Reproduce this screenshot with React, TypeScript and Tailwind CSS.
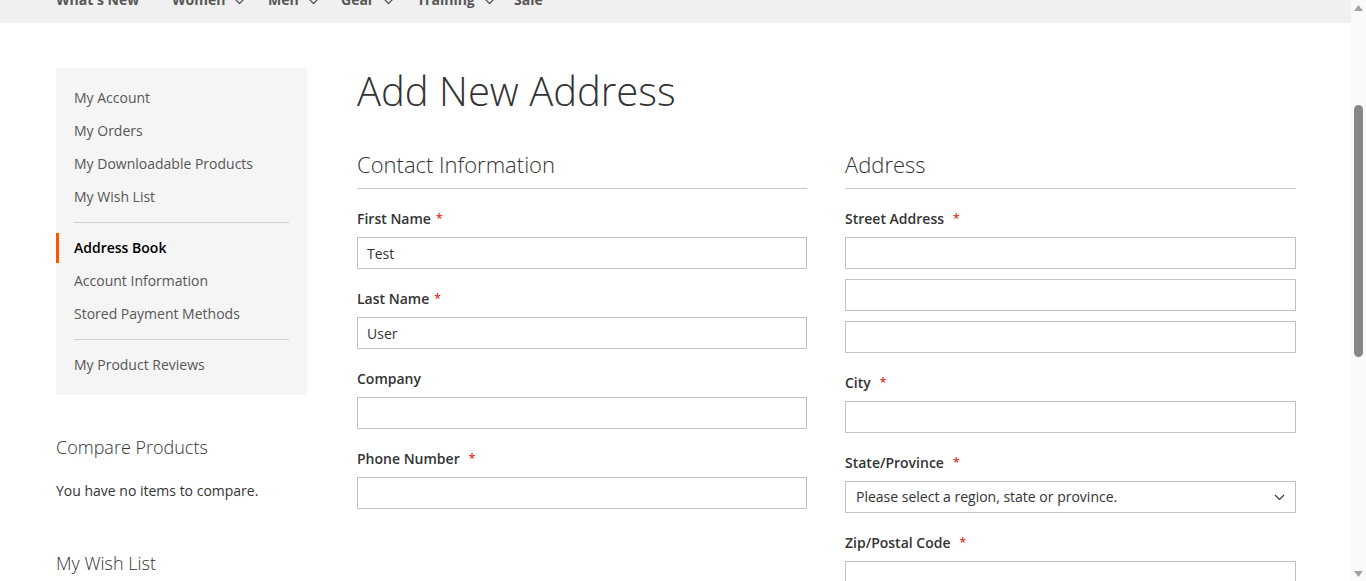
import React from "react";

const navItems = [
  { label: "What's New", w: "w-[116px]", chevron: false },
  { label: "Women", w: "w-[96px]", chevron: true },
  { label: "Men", w: "w-[73px]", chevron: true },
  { label: "Gear", w: "w-[76px]", chevron: true },
  { label: "Training", w: "w-[97px]", chevron: true },
  { label: "Sale", w: "w-[60px]", chevron: false },
];

type NavEntry = { kind: "item"; label: string; active?: boolean } | { kind: "divider" };

const accountNav: NavEntry[] = [
  { kind: "item", label: "My Account" },
  { kind: "item", label: "My Orders" },
  { kind: "item", label: "My Downloadable Products" },
  { kind: "item", label: "My Wish List" },
  { kind: "divider" },
  { kind: "item", label: "Address Book", active: true },
  { kind: "item", label: "Account Information" },
  { kind: "item", label: "Stored Payment Methods" },
  { kind: "divider" },
  { kind: "item", label: "My Product Reviews" },
];

function Chevron() {
  return (
    <svg width="11" height="7" viewBox="0 0 11 7" className="ml-[9px] mt-[2px]">
      <polyline points="1,1 5.5,5.5 10,1" fill="none" stroke="#575757" strokeWidth="1.3" />
    </svg>
  );
}

function Req({ wide }: { wide?: boolean }) {
  return <span className={`text-[#e02b27] text-[12px] ${wide ? "ml-[9px]" : "ml-[5px]"}`}>*</span>;
}

function Label({ text, req, wide }: { text: string; req?: boolean; wide?: boolean }) {
  return (
    <div className="h-[20px] leading-[20px] text-[14px] font-semibold text-[#333] mb-[8px] flex items-start">
      <span>{text}</span>
      {req && <Req wide={wide} />}
    </div>
  );
}

function Input({ value }: { value?: string }) {
  return (
    <div className="h-[32px] border border-[#c2c2c2] bg-white px-[9px] flex items-center text-[14px] text-[#333]">
      {value}
    </div>
  );
}

function Field({ label, req, wide, value, last }: { label: string; req?: boolean; wide?: boolean; value?: string; last?: boolean }) {
  return (
    <div className={last ? "" : "mb-[20px]"}>
      <Label text={label} req={req} wide={wide} />
      <Input value={value} />
    </div>
  );
}

export default function App() {
  let afterDivider = true;
  return (
    <div className="w-full h-[581px] overflow-hidden flex bg-white font-['Open_Sans','Noto_Sans',sans-serif] text-[#333]">
      <div className="flex-1 min-w-0 flex flex-col">
        {/* top nav (scrolled) */}
        <div className="h-[23px] bg-[#f0f0f0] overflow-hidden shrink-0">
          <div className="flex items-center pl-[56px] mt-[-10px] h-[20px] leading-[20px] text-[14px] font-bold text-[#575757]">
            {navItems.map((n) => (
              <div key={n.label} className={`${n.w} flex items-center shrink-0`}>
                <span>{n.label}</span>
                {n.chevron && <Chevron />}
              </div>
            ))}
          </div>
        </div>

        <div className="flex pl-[56px] pt-[45px]">
          {/* sidebar */}
          <div className="w-[251px] shrink-0">
            <div className="bg-[#f5f5f5] py-[15px]">
              {accountNav.map((e, i) => {
                if (e.kind === "divider") {
                  afterDivider = true;
                  return <div key={i} className="h-px bg-[#d1d1d1] mx-[18px] my-[10px]" />;
                }
                const mt = afterDivider ? "" : "mt-[3px]";
                afterDivider = false;
                return (
                  <div
                    key={i}
                    className={`${mt} h-[30px] flex items-center pb-[2px] border-l-[3px] pl-[15px] text-[14px] ${
                      e.active ? "border-[#ff5501] text-black font-semibold" : "border-transparent text-[#575757]"
                    }`}
                  >
                    {e.label}
                  </div>
                );
              })}
            </div>
            <div className="mt-[39px] h-[26px] leading-[26px] text-[18px] font-light text-[#333]">Compare Products</div>
            <div className="mt-[21px] h-[20px] leading-[20px] text-[14px] text-[#333]">You have no items to compare.</div>
            <div className="mt-[49px] h-[26px] leading-[26px] text-[18px] font-light text-[#333]">My Wish List</div>
          </div>

          {/* main */}
          <div className="ml-[50px] w-[939px] shrink-0">
            <h1 className="h-[46px] leading-[46px] text-[40px] font-light text-[#333]">Add New Address</h1>
            <div className="mt-[36px] flex gap-[38px]">
              <div className="w-[450px] shrink-0">
                <div className="h-[28px] leading-[28px] text-[22px] font-light text-[#333] mb-[10px]">Contact Information</div>
                <div className="h-px bg-[#c6c6c6] mb-[20px]" />
                <Field label="First Name" req value="Test" />
                <Field label="Last Name" req value="User" />
                <Field label="Company" />
                <Field label="Phone Number" req wide last />
              </div>
              <div className="w-[451px] shrink-0">
                <div className="h-[28px] leading-[28px] text-[22px] font-light text-[#333] mb-[10px]">Address</div>
                <div className="h-px bg-[#c6c6c6] mb-[20px]" />
                <div className="mb-[20px]">
                  <Label text="Street Address" req wide />
                  <div className="flex flex-col gap-[10px]">
                    <Input />
                    <Input />
                    <Input />
                  </div>
                </div>
                <Field label="City" req wide />
                <div className="mb-[20px]">
                  <Label text="State/Province" req wide />
                  <div className="h-[32px] border border-[#c2c2c2] bg-white pl-[10px] pr-[10px] pb-[1px] flex items-center justify-between text-[14px] text-[#333]">
                    <span>Please select a region, state or province.</span>
                    <svg width="11" height="7" viewBox="0 0 11 7" className="mt-[2px]">
                      <polyline points="1,1 5.5,5.5 10,1" fill="none" stroke="#333" strokeWidth="1.1" />
                    </svg>
                  </div>
                </div>
                <Field label="Zip/Postal Code" req wide last />
              </div>
            </div>
          </div>
        </div>
      </div>

      {/* scrollbar */}
      <div className="w-[15px] shrink-0 bg-[#fafafa] flex flex-col items-center">
        <svg width="9" height="6" viewBox="0 0 9 6" className="mt-[5px]">
          <polygon points="4.5,0 9,6 0,6" fill="#a3a3a3" />
        </svg>
        <div className="mt-[94px] w-[9px] h-[252px] rounded-full bg-[#878787]" />
        <div className="flex-1" />
        <svg width="9" height="6" viewBox="0 0 9 6" className="mb-[4px]">
          <polygon points="0,0 9,0 4.5,6" fill="#a3a3a3" />
        </svg>
      </div>
    </div>
  );
}
